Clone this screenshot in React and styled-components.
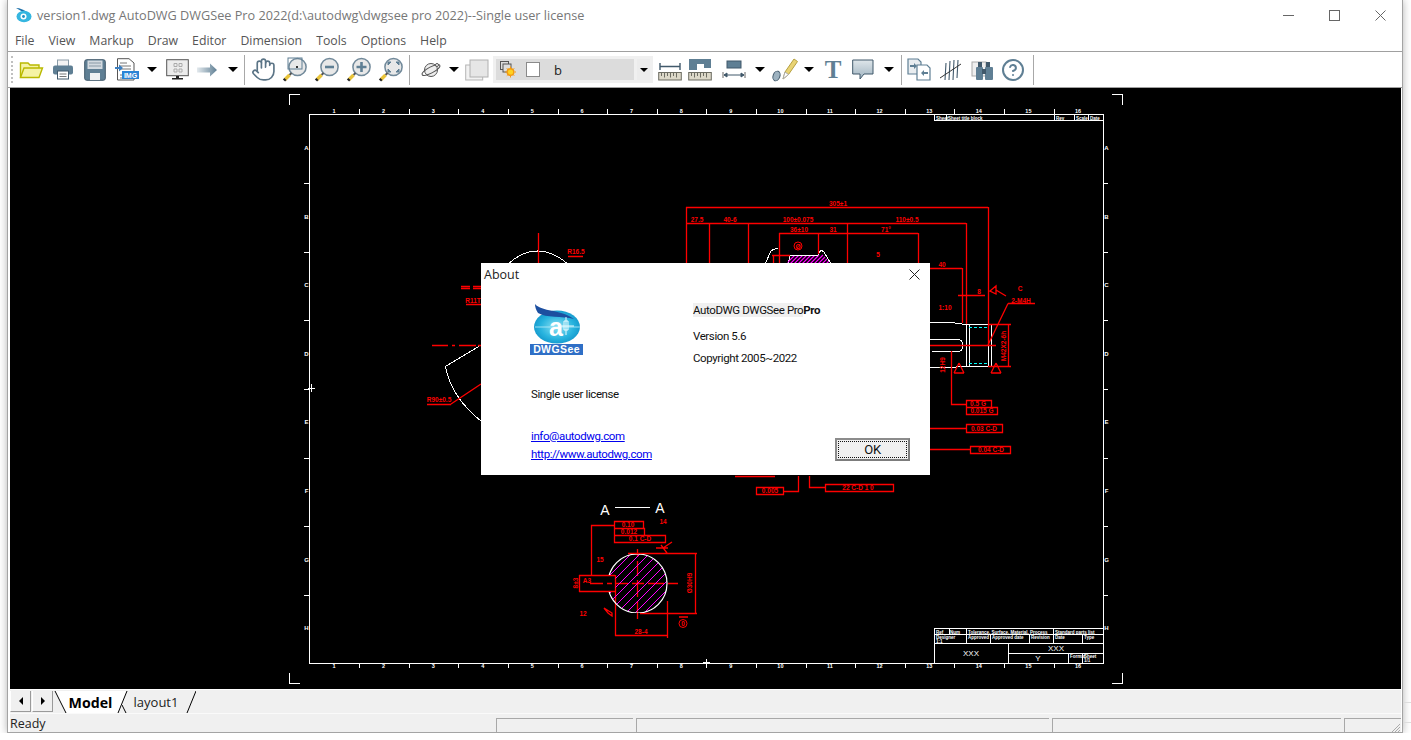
import React from "react";
import styled, { createGlobalStyle } from "styled-components";
import { Hand, CircleHelp } from "lucide-react";

const Global = createGlobalStyle`
  html, body { margin: 0; padding: 0; background: #fff; overflow: hidden; }
  body { font-family: "Open Sans", "Noto Sans", sans-serif; }
`;

const Window = styled.div`
  width: 1396px;
  height: 733px;
  margin-left: 7px;
  box-sizing: border-box;
  border: 1px solid #a4a4a4;
  border-top: 0;
  box-shadow: 0 0 8px rgba(0, 0, 0, 0.3);
  background: #fff;
  display: flex;
  flex-direction: column;
  overflow: hidden;
`;

const BehindWindow = styled.div`
  position: absolute;
  left: 1404px;
  top: 702px;
  width: 7px;
  height: 19px;
  border-top: 1px solid #ddd;
  border-bottom: 1px solid #ddd;
`;

const TitleBar = styled.div`
  height: 30px;
  display: flex;
  align-items: center;
  padding-left: 7px;
  margin-right: -1px;
  flex: none;
`;

const TitleText = styled.span`
  margin-left: 5px;
  font-size: 12.7px;
  color: #777;
  flex: 1;
  white-space: nowrap;
`;

const WinButton = styled.div`
  width: 46px;
  height: 30px;
  display: flex;
  align-items: center;
  justify-content: center;
`;

const MenuBar = styled.div`
  height: 21px;
  display: flex;
  align-items: center;
  gap: 14px;
  padding-left: 7px;
  border-bottom: 1px solid #a0a0a0;
  flex: none;
`;

const MenuItem = styled.span`
  font-size: 12.3px;
  color: #555;
`;

const Toolbar = styled.div`
  height: 35px;
  display: flex;
  align-items: center;
  padding-left: 3px;
  border-bottom: 1px solid #a0a0a0;
  background: #fff;
  flex: none;
`;

const Grip = styled.div`
  width: 0;
  height: 27px;
  margin-right: 2px;
  border-left: 2px dotted #c0c0c0;
`;

const Slot = styled.div`
  width: ${(p) => p.$w}px;
  flex: none;
  display: flex;
  align-items: center;
  justify-content: center;
`;

const Drop = styled.div`
  width: ${(p) => p.$w}px;
  flex: none;
  display: flex;
  justify-content: center;
  &::after {
    content: "";
    border-left: 5px solid transparent;
    border-right: 5px solid transparent;
    border-top: 5px solid #000;
  }
`;

const Sep = styled.div`
  width: 1px;
  height: 30px;
  flex: none;
  background: #a8a8a8;
  margin: 0 ${(p) => p.$r}px 0 ${(p) => p.$l}px;
`;

const Combo = styled.div`
  width: 160px;
  height: 27px;
  flex: none;
  box-sizing: border-box;
  background: #f0f0f0;
  padding: 3px;
  display: flex;
  gap: 3px;
`;

const ComboField = styled.div`
  width: 138px;
  background: #dcdcdc;
  display: flex;
  align-items: center;
  padding-left: 4px;
  box-sizing: border-box;
`;

const ComboCheck = styled.div`
  width: 12px;
  height: 13px;
  margin-left: 10px;
  background: #fff;
  border: 1px solid #8a8a8a;
`;

const ComboValue = styled.span`
  margin-left: 14px;
  font-size: 13px;
  color: #222;
`;

const ComboArrow = styled.div`
  flex: 1;
  background: #ececec;
  display: flex;
  align-items: center;
  justify-content: center;
  &::after {
    content: "";
    border-left: 4px solid transparent;
    border-right: 4px solid transparent;
    border-top: 4px solid #000;
  }
`;

const Canvas = styled.div`
  height: 600px;
  flex: none;
  margin-left: 2px;
  margin-right: 1px;
  position: relative;
  background: #000;
  border-top: 1px solid #000;
  & > svg { display: block; }
`;

const Dialog = styled.div`
  position: absolute;
  left: 471px;
  top: 174px;
  width: 449px;
  height: 212px;
  background: #fff;
  display: flex;
  flex-direction: column;
  font-family: Roboto, "Liberation Sans", sans-serif;
  font-size: 11.5px;
  letter-spacing: -0.4px;
  color: #111;
`;

const DialogTitle = styled.div`
  height: 23px;
  display: flex;
  align-items: center;
  justify-content: space-between;
  padding: 0 10px 0 3px;
  font-family: "Open Sans", sans-serif;
  font-size: 12.5px;
  letter-spacing: 0;
  color: #222;
  flex: none;
`;

const DialogTop = styled.div`
  display: flex;
  padding: 17px 0 0 49px;
  height: 74px;
  flex: none;
`;

const Info = styled.div`
  margin-left: 109px;
  display: flex;
  flex-direction: column;
`;

const InfoLine = styled.div`
  line-height: 14px;
  margin-bottom: ${(p) => p.$after || 0}px;
`;

const Product = styled.span`
  background: #f0f0f0;
`;

const License = styled.div`
  margin: 10px 0 0 50px;
  line-height: 14px;
`;

const DialogBottom = styled.div`
  display: flex;
  justify-content: space-between;
  padding: 28px 20px 0 50px;
`;

const Links = styled.div`
  display: flex;
  flex-direction: column;
  gap: 4px;
`;

const Link = styled.a`
  color: #0000ee;
  text-decoration: underline;
  line-height: 14px;
`;

const OkButton = styled.div`
  width: 75px;
  height: 23px;
  box-sizing: border-box;
  margin-top: 9px;
  border: 2px solid #7c7c7c;
  border-top-color: #8c8c8c;
  border-left-color: #8c8c8c;
  background: #f0f0f0;
  display: flex;
  padding: 1px;
`;

const OkInner = styled.div`
  flex: 1;
  border: 1px dotted #111;
  text-align: center;
  font-size: 13px;
  line-height: 15px;
`;

const TabBar = styled.div`
  height: 22px;
  flex: none;
  margin-left: 2px;
  margin-right: 1px;
  display: flex;
  background: #f0f0f0;
  border-top: 1px solid #fff;
  box-shadow: 0 -1px 0 0 #000;
  padding-top: 1px;
`;

const ScrollButton = styled.div`
  width: 21px;
  height: 21px;
  margin-right: 1px;
  box-sizing: border-box;
  border-right: 1px solid #9a9a9a;
  border-bottom: 1px solid #9a9a9a;
  border-left: 1px solid #fff;
  background: #f0f0f0;
  display: flex;
  align-items: center;
  justify-content: center;
`;

const Tab = styled.div`
  position: relative;
  width: ${(p) => p.$w}px;
  height: 22px;
  flex: none;
  box-sizing: border-box;
  padding: 0 ${(p) => p.$pr || 0}px 0 ${(p) => p.$pl || 0}px;
  display: flex;
  align-items: center;
  justify-content: center;
  & > svg { position: absolute; left: 0; top: 0; }
`;

const TabLabel = styled.span`
  position: relative;
  font-family: "Open Sans", sans-serif;
  font-size: ${(p) => (p.$active ? "14.2px" : "13px")};
  font-weight: ${(p) => (p.$active ? 700 : 400)};
  color: ${(p) => (p.$active ? "#000" : "#222")};
`;

const StatusBar = styled.div`
  height: 20px;
  flex: none;
  margin-left: 2px;
  margin-right: 1px;
  display: flex;
  align-items: flex-end;
  background: #f0f0f0;
  border-top: 1px solid #fafafa;
  position: relative;
`;

const StatusText = styled.div`
  width: 486px;
  height: 20px;
  flex: none;
  line-height: 20px;
  font-size: 12.5px;
  color: #222;
`;

const Pane = styled.div`
  width: ${(p) => p.$w}px;
  height: 16px;
  flex: none;
  margin-right: 3px;
  border-top: 1px solid #a8a8a8;
  border-left: 1px solid #a8a8a8;
  box-sizing: border-box;
`;

const Sizer = styled.svg`
  position: absolute;
  right: 0;
  bottom: 0;
`;

const SLATE = "#5f7f94";
const SLATE_D = "#41596b";

function AppIcon() {
  return (
    <svg width="17" height="16" viewBox="0 0 17 16">
      <path d="M1 1 C5 1 10 3 13 6 L8 5 Z" fill="#1c6fa8" />
      <ellipse cx="9" cy="9.5" rx="7.5" ry="5.8" fill="#35b6e0" />
      <circle cx="8.5" cy="9.5" r="3" fill="#fff" />
      <circle cx="8.5" cy="9.5" r="1.4" fill="#1b8fc4" />
    </svg>
  );
}

function Folder() {
  return (
    <svg width="25" height="18" viewBox="0 0 25 18">
      <path d="M1.5 16.5 V2 H9 L11 4 H20 V7" fill="#f5f3a5" stroke="#b9b900" strokeWidth="1.4" />
      <path d="M1.5 16.5 L5 7 H23.5 L20 16.5 Z" fill="#f5f3a5" stroke="#b9b900" strokeWidth="1.4" />
    </svg>
  );
}

function Printer() {
  return (
    <svg width="22" height="21" viewBox="0 0 22 21">
      <rect x="5.5" y="1" width="11" height="7" fill="#f4f4f4" stroke="#8b9ca8" />
      <rect x="1" y="6.5" width="20" height="9" rx="2" fill={SLATE} />
      <rect x="5.5" y="12" width="11" height="8" fill="#fff" stroke={SLATE_D} />
      <path d="M7.5 15 H14.5 M7.5 17.5 H14.5" stroke="#777" />
    </svg>
  );
}

function Floppy() {
  return (
    <svg width="22" height="22" viewBox="0 0 22 22">
      <rect x="0.7" y="0.7" width="20.6" height="20.6" rx="2" fill={SLATE} stroke={SLATE_D} />
      <rect x="3.5" y="1.5" width="15" height="8.5" fill="#d3dae0" />
      <path d="M5 4 H17 M5 7 H17" stroke="#8a9aa6" />
      <rect x="6" y="14" width="10" height="7" fill="#eef1f3" />
    </svg>
  );
}

function ImgDoc() {
  return (
    <svg width="24" height="23" viewBox="0 0 24 23">
      <path d="M2.5 0.7 H14 L19 5 V22 H2.5 Z" fill="#fff" stroke="#555" />
      <path d="M5 5 H12 M5 8 H16 M5 11 H16 M5 17 H9 M5 20 H16" stroke="#777" />
      <path d="M0 9 H4 V6.5 L8 10 L4 13.5 V11 H0 Z" fill="#3d7fc0" />
      <rect x="7" y="13" width="17" height="8" fill="#2b84d6" />
      <text x="15.5" y="19.6" fontSize="7" fontWeight="700" fontFamily="Liberation Sans" fill="#fff" textAnchor="middle">IMG</text>
    </svg>
  );
}

function Monitor() {
  return (
    <svg width="23" height="21" viewBox="0 0 23 21">
      <rect x="0.7" y="0.7" width="21.6" height="16" fill="#ececec" stroke="#555" />
      <path d="M8 4.5 h3 v3 h-3 z M13 4.5 h3 v3 h-3 z M8 10 h3 v3 h-3 z M13 10 h3 v3 h-3 z" fill="none" stroke="#aaa" />
      <path d="M10 17 h3 v2 h4 v1.5 h-11 v-1.5 h4 z" fill="#222" />
    </svg>
  );
}

function ArrowRight() {
  return (
    <svg width="22" height="14" viewBox="0 0 22 14">
      <defs>
        <linearGradient id="arr" x1="0" x2="1" y1="0" y2="0">
          <stop offset="0" stopColor="#e4eaee" />
          <stop offset="1" stopColor="#5f7f94" />
        </linearGradient>
      </defs>
      <path d="M0 4.5 H13 V0.5 L20 7 L13 13.5 V9.5 H0 Z" fill="url(#arr)" />
    </svg>
  );
}

function Lens({ children }) {
  return (
    <svg width="26" height="26" viewBox="0 0 26 26">
      <circle cx="15.5" cy="10" r="8.6" fill="#e8e8e8" stroke="#71899a" strokeWidth="1.5" />
      {children}
      <path d="M9.5 16 L7.5 18" stroke="#555" strokeWidth="2" />
      <path d="M7.5 18 L3 22.5" stroke="#e8c33a" strokeWidth="3.4" />
      <path d="M3.4 22 L2 23.5" stroke="#222" strokeWidth="3" />
    </svg>
  );
}

function Orbit() {
  return (
    <svg width="22" height="20" viewBox="0 0 22 20">
      <circle cx="11" cy="10" r="6.5" fill="#eee" stroke="#555" />
      <ellipse cx="11" cy="10" rx="10" ry="3" fill="none" stroke="#555" transform="rotate(-28 11 10)" />
      <circle cx="17" cy="5" r="1.5" fill="#fff" stroke="#555" />
    </svg>
  );
}

function Layers() {
  return (
    <svg width="24" height="22" viewBox="0 0 24 22">
      <rect x="0.7" y="6" width="17" height="15" fill="#f2f2f2" stroke="#b5b5b5" />
      <rect x="5" y="1" width="18" height="17" fill="#e6e6e6" stroke="#b0b0b0" />
    </svg>
  );
}

function LayerSun() {
  return (
    <svg width="16" height="17" viewBox="0 0 16 17">
      <rect x="0.5" y="0.5" width="8" height="8" fill="none" stroke="#555" />
      <rect x="3" y="3" width="8" height="8" fill="#ddd" stroke="#555" />
      <circle cx="10.5" cy="11" r="3.3" fill="#ffd21f" stroke="#f39a12" strokeWidth="1.4" />
      <path d="M10.5 5.5 V7 M10.5 15 V16.5 M5 11 H6.5 M14.5 11 H16 M6.8 7.3 L8 8.5 M13 13.5 L14.2 14.7 M14.2 7.3 L13 8.5 M8 13.5 L6.8 14.7" stroke="#f39a12" />
    </svg>
  );
}

function Ruler({ children }) {
  const ticks = [3, 6, 9, 12, 15, 18];
  return (
    <svg width="24" height="23" viewBox="0 0 24 23">
      {children}
      <rect x="0.7" y="14.5" width="22.6" height="7.5" fill="#dcd8c8" stroke="#6c6c62" />
      {ticks.map((t) => (
        <path key={t} d={`M${t + 0.5} 15 V${t % 2 ? 18 : 19.5}`} stroke="#6c6c62" />
      ))}
    </svg>
  );
}

function DimIcon() {
  return (
    <svg width="24" height="20" viewBox="0 0 24 20">
      <rect x="5" y="1" width="14" height="7" fill={SLATE} stroke={SLATE_D} />
      <path d="M1 12 V18 M23 12 V18" stroke="#666" />
      <path d="M2 15 H22 M2 15 L5 13 V17 Z M22 15 L19 13 V17 Z" stroke={SLATE_D} fill={SLATE_D} />
    </svg>
  );
}

function Pencil() {
  return (
    <svg width="26" height="24" viewBox="0 0 26 24">
      <ellipse cx="4.5" cy="18" rx="3.4" ry="5" fill="#9db2c0" stroke={SLATE_D} transform="rotate(20 4.5 18)" />
      <path d="M11 21 L13 14 L22 1 L25.5 3.5 L16.5 16.5 Z" fill="#e9d374" stroke="#b5a040" />
      <path d="M11 21 L13 14 L16.5 16.5 Z" fill="#fff" stroke="#aaa" />
    </svg>
  );
}

const BigT = styled.span`
  font-family: "Liberation Serif", serif;
  font-weight: 700;
  font-size: 25px;
  line-height: 24px;
  color: ${SLATE};
`;

function Callout() {
  return (
    <svg width="22" height="21" viewBox="0 0 22 21">
      <defs>
        <linearGradient id="cal" x1="0" x2="0" y1="0" y2="1">
          <stop offset="0" stopColor="#dfe6ea" />
          <stop offset="1" stopColor="#9fb3c0" />
        </linearGradient>
      </defs>
      <path d="M0.7 1 H21 V15 H12 L8 20 V15 H0.7 Z" fill="url(#cal)" stroke={SLATE_D} />
    </svg>
  );
}

function Compare() {
  return (
    <svg width="24" height="23" viewBox="0 0 24 23">
      <path d="M1 1 H11 L14 4 V16 H1 Z" fill="#e9edf0" stroke={SLATE} strokeWidth="1.2" />
      <path d="M10 7 H20 L23 10 V22 H10 Z" fill="#fff" stroke={SLATE} strokeWidth="1.2" />
      <path d="M3 7 H7 V5 L10 8 L7 11 V9 H3 Z M21 14 H17 V12 L14 15 L17 18 V16 H21 Z" fill={SLATE} />
    </svg>
  );
}

function Hatch() {
  return (
    <svg width="24" height="24" viewBox="0 0 24 24">
      <path d="M7 5 L6 22 M11 3 L10 22 M15 2 L14 22 M19 2 L18 20" stroke={SLATE_D} strokeWidth="1.1" fill="none" />
      <path d="M1 20 L22 6" stroke="#333" />
    </svg>
  );
}

function Binoculars() {
  return (
    <svg width="24" height="22" viewBox="0 0 24 22">
      <rect x="1" y="3" width="14" height="14" fill="#eee" stroke="#aaa" />
      <rect x="7" y="3" width="4" height="7" fill={SLATE_D} />
      <rect x="15" y="3" width="4" height="7" fill={SLATE_D} />
      <rect x="5" y="8" width="7" height="13" rx="1" fill={SLATE} />
      <rect x="14" y="8" width="8" height="13" rx="1" fill={SLATE} />
      <rect x="11" y="10" width="4" height="5" fill={SLATE_D} />
    </svg>
  );
}

function AboutLogo() {
  return (
    <svg width="54" height="53" viewBox="0 0 54 53">
      <defs>
        <radialGradient id="eye" cx="0.5" cy="0.5" r="0.6">
          <stop offset="0" stopColor="#8fe2f4" />
          <stop offset="0.6" stopColor="#27b3de" />
          <stop offset="1" stopColor="#0c8cc4" />
        </radialGradient>
      </defs>
      <ellipse cx="27" cy="24" rx="23" ry="16.5" fill="url(#eye)" />
      <path d="M5 1 C12 9 30 6 44 16 C32 13 16 15 8 10 C6 7 5 4 5 1 Z" fill="#1c4fa0" />
      <path d="M5 24 H50" stroke="#bdeefa" strokeWidth="0.8" />
      <text x="26" y="33" fontFamily="Liberation Sans" fontWeight="700" fontSize="25" letterSpacing="0" fill="#fff" textAnchor="middle">a</text>
      <path d="M34 18 H38 V27 H34 Z M36 14 V32 M30 23 H44" stroke="#e8fbff" strokeWidth="1" fill="none" />
      <rect x="0" y="41" width="53" height="11" fill="#2f6fc6" />
      <text x="26.5" y="50" fontFamily="Liberation Sans" fontWeight="700" fontSize="10.5" letterSpacing="0.4" fill="#fff" textAnchor="middle">DWGSee</text>
    </svg>
  );
}

const box = (x, y, w, h) => `M${x} ${y} H${x + w} V${y + h} H${x} Z`;

const whitePaths = [
  box(309.5, 113.5, 793.5, 548.5),
  "M289.5 104 V93.5 H300 M1112 93.5 H1122.5 V104 M289.5 672 V682.5 H300 M1112 682.5 H1122.5 V672",
  // sheet title blocks
  "M934.5 113.5 V119.5 H1103 M946.5 113.5 V119.5 M1054.5 113.5 V119.5 M1074.5 113.5 V119.5 M1088.5 113.5 V119.5",
  box(934.5, 627.5, 168.5, 34.5),
  "M934.5 633.5 H1103 M934.5 642.5 H1103 M1008.5 652.5 H1103",
  "M949.5 627.5 V633.5 M966.5 627.5 V642.5 M1053.5 627.5 V642.5 M990.5 633.5 V642.5 M1029.5 633.5 V642.5 M1082.5 633.5 V642.5",
  "M1008.5 642.5 V662 M1068.5 652.5 V662 M1082.5 652.5 V662",
  // centre marks
  "M311 383 V391 M308 387.5 H315 M706 658 V664 M703 661.5 H710",
  // section view A-A
  "M615 506.5 H650",
  // shaft
  "M765 263 L771 250 Q774 247 778 248 M788 254.5 H818 M818 254 L821 249 L824 251 L831 263 M788 263 L790 255",
  "M930 321.5 H951 L966 323.5 M966.5 323 V366 M969.5 323 V366 M988.5 323 V366 M991.5 323 V366 M966 323.5 H991 M966 365.5 H991 M930 366.5 H951 L966 365",
  "M930 338.5 H958 Q963 339 963 344.5 Q963 350 958 350.5 H932",
  // part outline on the left
  "M481 344 L445.5 365.5 Q451 396 481 420",
  "M508 263 Q537 237 568 263",
];

const redPaths = [
  "M686 206.5 H988 M686.5 206 V263 M988.5 206 V344",
  "M686 222.5 H966 M709.5 222 V263 M748.5 222 V263 M847.5 222 V263 M966.5 222 V323",
  "M779 232.5 H918 M779.5 232 V263 M818.5 232 V253 M918.5 232 V263",
  "M772 254.5 H790 M773.5 254 V263",
  "M930 267.5 H962 M962.5 267 V322",
  "M958 294.5 H985 M1008 302.5 H1035 M1008 302.5 L988 344",
  "M930 344.5 H996",
  "M988 323.5 H1011 M988 365.5 H1011 M1008.5 323 V366",
  "M951.5 350 V403.5 H966",
  box(966.5, 399.5, 25, 7),
  box(966.5, 406.5, 31, 7),
  box(966.5, 423.5, 36, 8),
  "M930 427.5 H966",
  box(970.5, 445.5, 40, 7),
  "M930 448.5 H970",
  "M990 290 L996 285 V293 Z M996 289 L1006 295",
  "M954 372 H964 M959 362 L954 372 M959 362 L964 372",
  "M991 372 H1001 M996 362 L991 372 M996 362 L1001 372",
  // left side of part
  "M432 344.5 H448 M452 344.5 H455 M459 344.5 H476 M478 344.5 H481",
  "M538.5 232 V263",
  "M451 403 L481 383 M427 403.5 H451",
  "M466 303.5 H481 M461 285.5 H470 M473 285.5 H481 M461 287.5 H470 M473 287.5 H481",
  "M568 255.5 H583",
  // below the dialog
  "M735 475.5 H775",
  box(756.5, 486.5, 27, 7),
  "M783 490.5 H798.5 V475",
  box(825.5, 483.5, 68, 7),
  "M809.5 475 V486.5 H825",
  // section view
  box(614.5, 520.5, 29, 7),
  box(614.5, 527.5, 30, 7),
  box(614.5, 534.5, 51, 7),
  "M614 524.5 H591.5 V574",
  "M579 574.5 H615 M579 590.5 H615 M579.5 574 V591",
  "M615.5 574 V635 M667.5 600 V637 M615 634.5 H667",
  "M628 552.5 H697 M640 612.5 H697 M695.5 552 V613",
  "M590 582.5 H603 M607 582.5 H612 M616 582.5 H628 M632 582.5 H644 M648 582.5 H664 M668 582.5 H678",
  "M637.5 548 V556 M637.5 560 V575 M637.5 579 V596 M637.5 600 V618",
  "M661 544 L667 552 M663 547 L672 541 M656 547 H668",
  "M604 607 L612 612 V615 L608 612 Z",
  "M679 616 H688",
];

const redLabels = [
  [838, 205, "305±1"], [697, 221, "27.5"], [730, 221, "40-6"], [798, 221, "100±0.075"],
  [907, 221, "110±0.5"], [799, 231, "36±10"], [833, 231, "31"], [886, 231, "71°"],
  [878, 256, "5"], [942, 266, "40"], [979, 293, "8"], [1020, 290, "C"], [1021, 302, "2-M4H"],
  [945, 309, "1:10"], [978, 405, "0.5 G"], [982, 412, "0.015 G"], [984, 430, "0.03 C-D"],
  [991, 451, "0.04 C-D"], [770, 492, "0.005"], [858, 489, "22 C-D 1 0"], [628, 526, "0.10"],
  [629, 533, "0.012"], [640, 540, "0.1 C-D"], [663, 523, "14"], [600, 561, "15"], [583, 615, "12"],
  [641, 633, "28-4"], [798, 248, "Ø"], [683, 625, "0"], [439, 401, "R90±0.5"], [473, 302, "R11T"],
  [576, 253, "R16.5"], [587, 582, "A3"],
];

const Frame = () => {
  const topTicks = Array.from({ length: 15 }, (_, i) => 309.5 + (i + 1) * 49.6);
  const sideTicks = Array.from({ length: 7 }, (_, i) => 113.5 + (i + 1) * 68.6);
  const letters = "ABCDEFGH".split("");
  return (
    <g>
      <path
        d={
          topTicks.map((x) => `M${Math.round(x) + 0.5} 108 V113 M${Math.round(x) + 0.5} 662 V667`).join(" ") +
          " " +
          sideTicks.map((y) => `M304 ${Math.round(y) + 0.5} H309 M1103 ${Math.round(y) + 0.5} H1108`).join(" ")
        }
        stroke="#fff"
        fill="none"
      />
      {Array.from({ length: 16 }, (_, i) => (
        <g key={i} fill="#fff" fontSize="5.5" fontWeight="700" fontFamily="Liberation Sans" textAnchor="middle">
          <text x={334 + i * 49.6} y="112">{i + 1}</text>
          <text x={334 + i * 49.6} y="667">{i + 1}</text>
        </g>
      ))}
      {letters.map((l, i) => (
        <g key={l} fill="#fff" fontSize="6" fontWeight="700" fontFamily="Liberation Sans" textAnchor="middle">
          <text x="306.5" y={149 + i * 68.6}>{l}</text>
          <text x="1106.5" y={149 + i * 68.6}>{l}</text>
        </g>
      ))}
      <g fill="#fff" fontSize="4.5" fontWeight="700" fontFamily="Liberation Sans">
        <text x="936" y="118.5">Sheet</text>
        <text x="948" y="118.5">Sheet title block</text>
        <text x="1056" y="118.5">Rev</text>
        <text x="1076" y="118.5">Scale</text>
        <text x="1090" y="118.5">Date</text>
        <text x="936" y="632.5">Ref</text>
        <text x="950" y="632.5">Num</text>
        <text x="968" y="632.5">Tolerance, Surface, Material, Process</text>
        <text x="1055" y="632.5">Standard parts list</text>
        <text x="936" y="638">Designer</text>
        <text x="936" y="642">1:1</text>
        <text x="968" y="638">Approved</text>
        <text x="992" y="638">Approved date</text>
        <text x="1031" y="638">Revision</text>
        <text x="1055" y="638">Date</text>
        <text x="1084" y="638">Type</text>
        <text x="1070" y="657">Format</text>
        <text x="1084" y="657">Sheet</text>
        <text x="1084" y="661">1/1</text>
      </g>
      <g fill="#fff" fontSize="8" fontFamily="Liberation Sans" textAnchor="middle">
        <text x="971" y="655">XXX</text>
        <text x="1056" y="650">XXX</text>
        <text x="1038" y="660">Y</text>
      </g>
      <g fill="#fff" fontSize="14" fontFamily="Liberation Sans" textAnchor="middle">
        <text x="605" y="514">A</text>
        <text x="660" y="512">A</text>
      </g>
    </g>
  );
};

const hatchLines = [];
for (let i = -80; i < 80; i += 9) {
  hatchLines.push(`M${637 + i - 40} ${582 + 40} L${637 + i + 40} ${582 - 40}`);
}
const topHatch = [];
for (let x = 786; x < 836; x += 4) {
  topHatch.push(`M${x} 263 L${x + 9} 254`);
}

function Drawing() {
  return (
    <svg width="1391" height="600" viewBox="10 88 1391 600">
      <defs>
        <clipPath id="shaftClip">
          <path d="M615.5 574 H608 V553 H668 V612 H608 V591 H615.5 Z" />
        </clipPath>
        <clipPath id="circleClip">
          <circle cx="637.5" cy="582.5" r="29.5" />
        </clipPath>
        <clipPath id="keyClip">
          <path d="M790 255 H818 L820 250 L831 263 H787 Z" />
        </clipPath>
      </defs>
      <Frame />
      <g shapeRendering="crispEdges" fill="none">
        <path d={whitePaths.join(" ")} stroke="#fff" />
        <path d="M969 326.5 H988 M969 362.5 H988" stroke="#00ffff" strokeDasharray="3 2" />
      </g>
      <path d={redPaths.join(" ")} fill="none" stroke="#ff0000" strokeWidth="1.3" />
      <g clipPath="url(#keyClip)">
        <path d={topHatch.join(" ")} stroke="#ff00ff" strokeWidth="1.2" />
      </g>
      <g clipPath="url(#shaftClip)">
        <g clipPath="url(#circleClip)">
          <path d={hatchLines.join(" ")} stroke="#ff00ff" />
        </g>
        <circle cx="637.5" cy="582.5" r="29.5" fill="none" stroke="#fff" strokeWidth="1.2" />
      </g>
      <circle cx="798" cy="245" r="4" fill="none" stroke="#ff0000" />
      <circle cx="683" cy="622.5" r="4" fill="none" stroke="#ff0000" />
      <g fill="#ff0000" fontSize="6.5" fontWeight="700" fontFamily="Liberation Sans" textAnchor="middle">
        {redLabels.map(([x, y, t]) => (
          <text key={`${x}-${y}`} x={x} y={y}>{t}</text>
        ))}
        <text transform="rotate(-90 1006 345)" x="1006" y="345">M42X2-6h</text>
        <text transform="rotate(-90 692 582)" x="692" y="582">Ø30H9</text>
        <text transform="rotate(-90 578 582)" x="578" y="582">8±3</text>
        <text transform="rotate(-90 945 364)" x="945" y="364">12H9</text>
      </g>
    </svg>
  );
}

const menus = ["File", "View", "Markup", "Draw", "Editor", "Dimension", "Tools", "Options", "Help"];

export default function App() {
  return (
    <>
      <Global />
      <BehindWindow />
      <Window>
        <TitleBar>
          <AppIcon />
          <TitleText>version1.dwg AutoDWG DWGSee Pro 2022(d:\autodwg\dwgsee pro 2022)--Single user license</TitleText>
          <WinButton>
            <svg width="11" height="11" viewBox="0 0 11 11"><path d="M0 5.5 H11" stroke="#666" /></svg>
          </WinButton>
          <WinButton>
            <svg width="11" height="11" viewBox="0 0 11 11"><rect x="0.5" y="0.5" width="10" height="10" fill="none" stroke="#666" /></svg>
          </WinButton>
          <WinButton>
            <svg width="11" height="11" viewBox="0 0 11 11"><path d="M0.5 0.5 L10.5 10.5 M10.5 0.5 L0.5 10.5" stroke="#666" /></svg>
          </WinButton>
        </TitleBar>
        <MenuBar>
          {menus.map((m) => (
            <MenuItem key={m}>{m}</MenuItem>
          ))}
        </MenuBar>
        <Toolbar>
          <Grip />
          <Slot $w={32}><Folder /></Slot>
          <Slot $w={32}><Printer /></Slot>
          <Slot $w={32}><Floppy /></Slot>
          <Slot $w={32}><ImgDoc /></Slot>
          <Drop $w={18} />
          <Slot $w={32}><Monitor /></Slot>
          <Slot $w={30}><ArrowRight /></Slot>
          <Drop $w={20} />
          <Sep $l={1} $r={2} />
          <Slot $w={32}><Hand size={25} color="#5b7486" strokeWidth={1.6} fill="#fff" /></Slot>
          <Slot $w={32}>
            <Lens>
              <rect x="6" y="1" width="14" height="11" fill="none" stroke="#5f7f94" />
              <path d="M14 9 h2 v2 h-2 z" fill="#333" />
            </Lens>
          </Slot>
          <Slot $w={32}>
            <Lens><path d="M11 10 H20" stroke={SLATE} strokeWidth="2.6" /></Lens>
          </Slot>
          <Slot $w={32}>
            <Lens><path d="M10.5 10 H20.5 M15.5 5 V15" stroke={SLATE} strokeWidth="2.6" /></Lens>
          </Slot>
          <Slot $w={32}>
            <Lens><path d="M10 5 l3 0 l-3 3 z M21 5 l-3 0 l3 3 z M10 15 l3 0 l-3 -3 z M21 15 l-3 0 l3 -3 z" fill={SLATE} stroke={SLATE} /></Lens>
          </Slot>
          <Sep $l={2} $r={5} />
          <Slot $w={32}><Orbit /></Slot>
          <Drop $w={14} />
          <Slot $w={32}><Layers /></Slot>
          <Combo>
            <ComboField>
              <LayerSun />
              <ComboCheck />
              <ComboValue>b</ComboValue>
            </ComboField>
            <ComboArrow />
          </Combo>
          <Slot $w={2} />
          <Slot $w={30}><Ruler><path d="M2 8.5 H22 M2 5 V12 M22 5 V12" stroke={SLATE_D} strokeWidth="1.4" /></Ruler></Slot>
          <Slot $w={30}><Ruler><path d="M1 1 H23 V10 H16 V6 H9 V12 H1 Z" fill={SLATE} /></Ruler></Slot>
          <Slot $w={3} />
          <Slot $w={32}><DimIcon /></Slot>
          <Drop $w={20} />
          <Slot $w={30}><Pencil /></Slot>
          <Drop $w={17} />
          <Slot $w={32}><BigT>T</BigT></Slot>
          <Slot $w={28}><Callout /></Slot>
          <Drop $w={24} />
          <Sep $l={0} $r={1} />
          <Slot $w={31}><Compare /></Slot>
          <Slot $w={2} />
          <Slot $w={30}><Hatch /></Slot>
          <Slot $w={2} />
          <Slot $w={30}><Binoculars /></Slot>
          <Slot $w={30}><CircleHelp size={24} color={SLATE} strokeWidth={2} /></Slot>
          <Sep $l={5} $r={0} />
        </Toolbar>
        <Canvas>
          <Drawing />
          <Dialog>
            <DialogTitle>
              About
              <svg width="11" height="11" viewBox="0 0 11 11"><path d="M0.5 0.5 L10.5 10.5 M10.5 0.5 L0.5 10.5" stroke="#222" /></svg>
            </DialogTitle>
            <DialogTop>
              <AboutLogo />
              <Info>
                <InfoLine $after={12}><Product>AutoDWG DWGSee Pro</Product><b>Pro</b></InfoLine>
                <InfoLine $after={8}>Version 5.6</InfoLine>
                <InfoLine>Copyright 2005~2022</InfoLine>
              </Info>
            </DialogTop>
            <License>Single user license</License>
            <DialogBottom>
              <Links>
                <Link>info@autodwg.com</Link>
                <Link>http://www.autodwg.com</Link>
              </Links>
              <OkButton>
                <OkInner>OK</OkInner>
              </OkButton>
            </DialogBottom>
          </Dialog>
        </Canvas>
        <TabBar>
          <ScrollButton>
            <svg width="6" height="8" viewBox="0 0 6 8"><path d="M5 0 L1 4 L5 8 Z" fill="#000" /></svg>
          </ScrollButton>
          <ScrollButton>
            <svg width="6" height="8" viewBox="0 0 6 8"><path d="M1 0 L5 4 L1 8 Z" fill="#000" /></svg>
          </ScrollButton>
          <Tab $w={68} $pl={5}>
            <svg width="74" height="22" viewBox="0 0 74 22">
              <path d="M1 0 L12 22 H64 L73 0 Z" fill="#fff" />
              <path d="M1 0 L12 22 M73 0 L64 22" stroke="#000" fill="none" />
            </svg>
            <TabLabel $active>Model</TabLabel>
          </Tab>
          <Tab $w={74} $pr={6}>
            <svg width="74" height="22" viewBox="0 0 74 22">
              <path d="M0 14 L4 22 M74 0 L65 22" stroke="#000" fill="none" />
            </svg>
            <TabLabel>layout1</TabLabel>
          </Tab>
        </TabBar>
        <StatusBar>
          <StatusText>Ready</StatusText>
          <Pane $w={137} />
          <Pane $w={413} />
          <Pane $w={289} />
          <Pane $w={57} />
          <Sizer width="12" height="12" viewBox="0 0 12 12">
            <path d="M11 2 L2 11 M11 5 L5 11 M11 8 L8 11" stroke="#aaa" />
          </Sizer>
        </StatusBar>
      </Window>
    </>
  );
}
